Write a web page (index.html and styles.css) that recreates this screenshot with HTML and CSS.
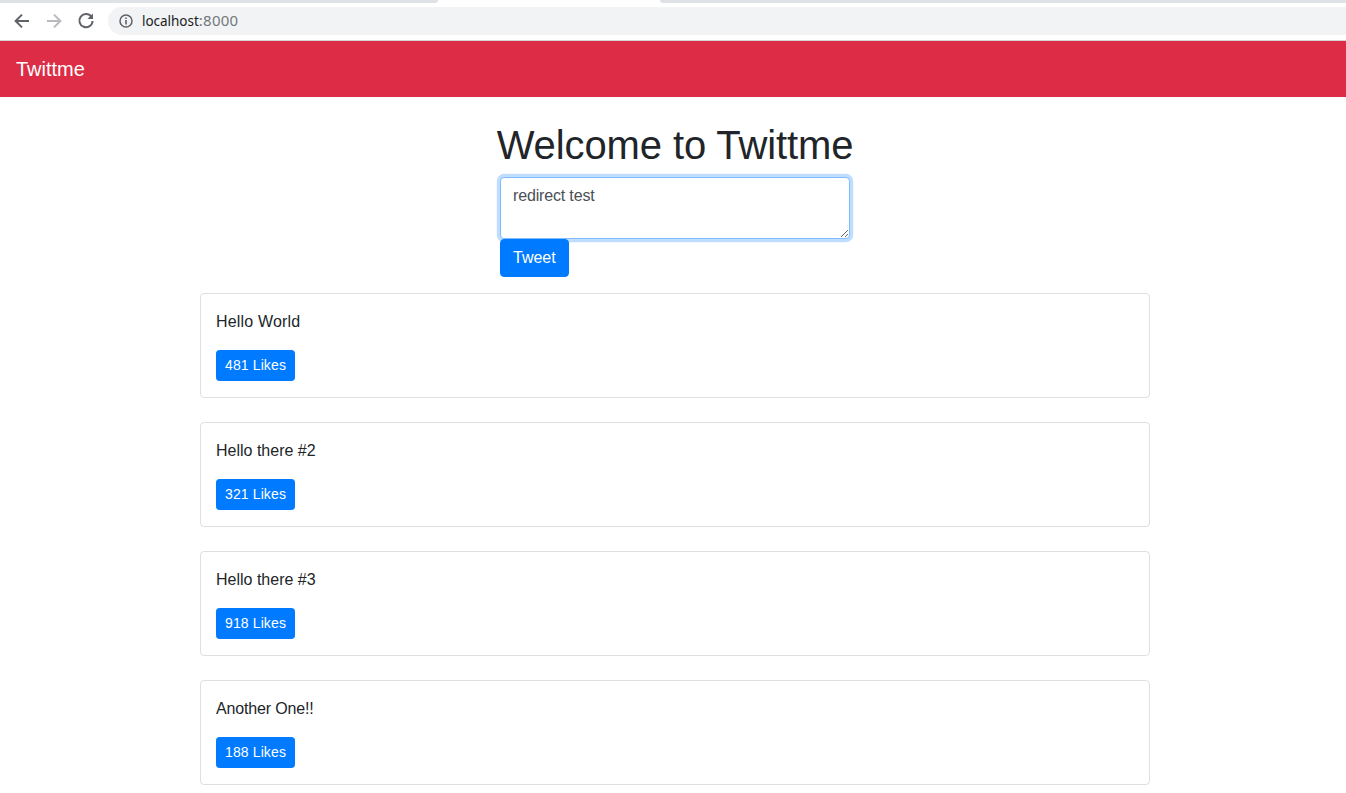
FILE: index.html
```html
<!DOCTYPE html>
<html lang="en">
<head>
<meta charset="utf-8">
<title>Twittme</title>
<link rel="stylesheet" href="styles.css">
</head>
<body>
<div class="browser">
  <div class="tabstrip">
    <div class="tab-left"></div>
    <div class="tab-active"></div>
    <div class="tab-right"></div>
  </div>
  <div class="toolbar">
    <svg class="tool-icon" width="18" height="18" viewBox="0 0 18 18"><path d="M16 9H3M9 2.6 2.6 9 9 15.4" fill="none" stroke="#5f6368" stroke-width="2"/></svg>
    <svg class="tool-icon" width="18" height="18" viewBox="0 0 18 18"><path d="M2 9H15M9 2.6 15.4 9 9 15.4" fill="none" stroke="#b8babd" stroke-width="2"/></svg>
    <svg class="tool-icon" width="18" height="18" viewBox="0 0 18 18"><path d="M14.4 4.8A6.6 6.6 0 1 0 15.6 9" fill="none" stroke="#5f6368" stroke-width="2"/><path d="M16 1.4V7h-5.6z" fill="#5f6368"/></svg>
    <div class="omnibox">
      <svg class="info-icon" width="14" height="14" viewBox="0 0 14 14"><circle cx="7" cy="7" r="6" fill="none" stroke="#5f6368" stroke-width="1.5"/><path d="M6.2 6h1.6v4.4H6.2zM6.2 3.4h1.6V5H6.2z" fill="#5f6368"/></svg>
      <span class="url"><span class="url-host">localhost</span><span class="url-port">:8000</span></span>
    </div>
  </div>
</div>
<nav class="navbar"><a class="brand" href="#">Twittme</a></nav>
<main class="page">
  <h1 class="title">Welcome to Twittme</h1>
  <form class="tweet-form">
    <textarea class="tweet-input" rows="2">redirect test</textarea>
    <button class="btn btn-main" type="button">Tweet</button>
  </form>
  <section class="tweets">
    <article class="card"><p class="card-text card-text-wide">Hello World</p><button class="btn btn-small" type="button">481 Likes</button></article>
    <article class="card"><p class="card-text">Hello there #2</p><button class="btn btn-small" type="button">321 Likes</button></article>
    <article class="card"><p class="card-text">Hello there #3</p><button class="btn btn-small" type="button">918 Likes</button></article>
    <article class="card"><p class="card-text card-text-tight">Another One!!</p><button class="btn btn-small" type="button">188 Likes</button></article>
  </section>
</main>
</body>
</html>
```
FILE: styles.css
```css
* { box-sizing: border-box; }
html, body { height: 793px; overflow: hidden; }
body {
  margin: 0;
  width: 1350px;
  background: #fff;
  color: #212529;
  font: 400 16px/1.5 "Liberation Sans", Arial, sans-serif;
}
.browser { height: 41px; background: #fff; border-bottom: 1px solid #d0d2d5; }
.tabstrip { display: flex; height: 3px; }
.tab-left { width: 438px; background: #dee1e6; border-bottom-right-radius: 6px; }
.tab-active { width: 222px; background: #fff; }
.tab-right { flex: 1; background: #dee1e6; border-bottom-left-radius: 6px; }
.toolbar { display: flex; align-items: center; height: 37px; padding: 4px 0 5px 13px; }
.tool-icon { flex: none; margin-right: 14px; }
.omnibox {
  display: flex;
  align-items: center;
  flex: 1;
  height: 28px;
  margin-left: -1px;
  padding-left: 11px;
  background: #f1f3f4;
  border-radius: 14px 0 0 14px;
  font: 400 13.5px/1 "Noto Sans", sans-serif;
}
.info-icon { margin-right: 9px; }
.url-host { color: #202124; letter-spacing: -.03px; }
.url-port { color: #74787c; font-size: 15px; letter-spacing: .25px; }
.navbar { display: flex; align-items: center; height: 56px; padding: 8px 16px; background: #dd2c45; }
.brand { color: #fff; font-size: 20px; line-height: 30px; text-decoration: none; }
.page { padding-top: 24px; }
.title { margin: 0 0 8px; font-size: 40px; font-weight: 500; line-height: 48px; letter-spacing: -.11px; text-align: center; }
.tweet-form { width: 350px; margin: 0 auto 16px; }
.tweet-input {
  display: block;
  width: 100%;
  height: 62px;
  padding: 6px 12px;
  color: #495057;
  background: #fff;
  border: 1px solid #80bdff;
  border-radius: 4px;
  box-shadow: 0 0 0 3.2px rgba(0, 123, 255, .25);
  outline: 0;
  font: inherit;
  letter-spacing: -.16px;
}
.btn {
  display: inline-block;
  position: relative;
  color: #fff;
  background: #007bff;
  border: 1px solid #007bff;
  font-family: inherit;
}
.btn-main { height: 38px; padding: 6px 12px; font-size: 16px; line-height: 24px; border-radius: 4px; }
.btn-small { display: block; height: 31px; padding: 4px 8px; font-size: 14px; line-height: 21px; letter-spacing: .12px; border-radius: 3.2px; font-kerning: none; }
.tweets { width: 950px; margin: 0 auto; }
.card { height: 105px; margin-bottom: 24px; padding: 16px 15px; border: 1px solid rgba(0, 0, 0, .125); border-radius: 4px; }
.card-text { margin: 0 0 16px; }
.card-text-wide { letter-spacing: .18px; }
.card-text-tight { letter-spacing: -.15px; }
```
